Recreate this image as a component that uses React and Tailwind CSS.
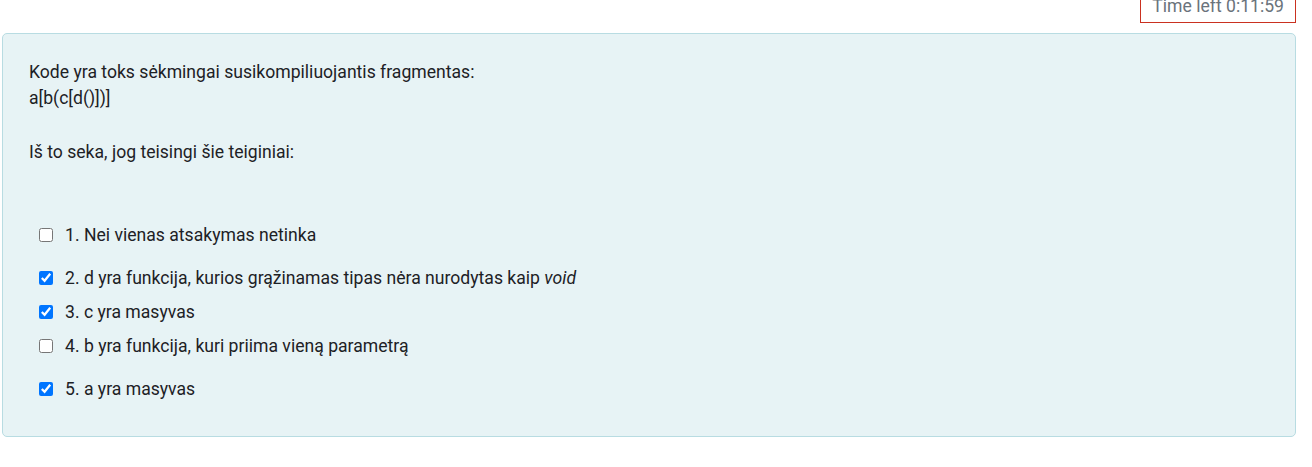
const options = [
  { id: 1, label: '1. Nei vienas atsakymas netinka', checked: false, gap: 'mt-[56.6px]' },
  { id: 2, label: '2. d yra funkcija, kurios grąžinamas tipas nėra nurodytas kaip ', italic: 'void', checked: true, gap: 'mt-[16.6px]' },
  { id: 3, label: '3. c yra masyvas', checked: true, gap: 'mt-[7.6px]' },
  { id: 4, label: '4. b yra funkcija, kuri priima vieną parametrą', checked: false, gap: 'mt-[7.6px]' },
  { id: 5, label: '5. a yra masyvas', checked: true, gap: 'mt-[16.6px]' },
];

export default function App() {
  return (
    <div className="h-[467px] overflow-hidden bg-white pl-[2px] pr-[16px] font-['Roboto',sans-serif] text-[17.6px] leading-[26.4px] text-[#1d2125]">
      <div className="flex justify-end">
        <div className="-mt-[11.5px] border border-[#ca3120] px-[11px] py-[3px] text-[#6a737b]">
          Time left 0:11:59
        </div>
      </div>

      <div className="mt-[10px] h-[404px] rounded-[5px] border border-[#b8dce2] bg-[#e7f3f5] pl-[26px] pt-[24.8px]">
        <p>
          Kode yra toks sėkmingai susikompiliuojantis fragmentas:
          <br />
          a[b(c[d()])]
        </p>
        <p className="mt-[27.2px]">Iš to seka, jog teisingi šie teiginiai:</p>

        {options.map((opt) => (
          <label key={opt.id} className={`flex items-center ${opt.gap}`}>
            <input
              type="checkbox"
              defaultChecked={opt.checked}
              className="m-0 ml-[10px] h-[14px] w-[14px] accent-[#0075ff]"
            />
            <span className="ml-3">
              {opt.label}
              {opt.italic && <em>{opt.italic}</em>}
            </span>
          </label>
        ))}
      </div>
    </div>
  );
}
